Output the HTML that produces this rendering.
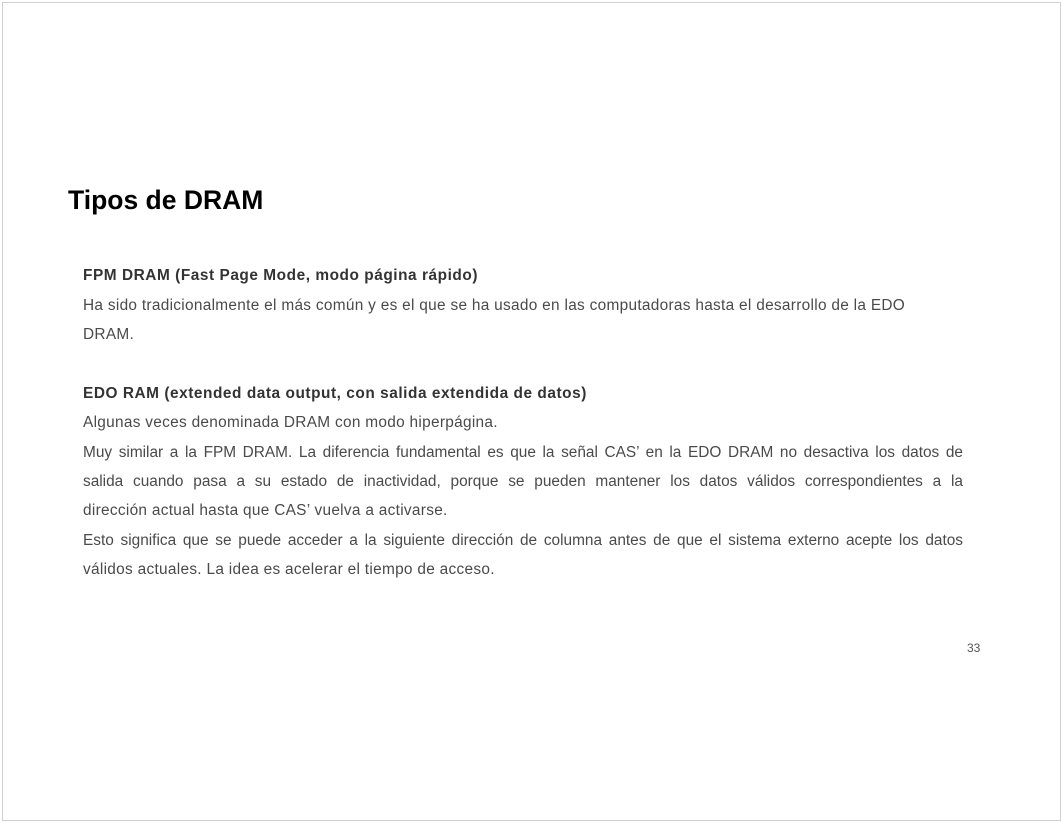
<!DOCTYPE html>
<html><head><meta charset="utf-8"><style>
body{margin:0;width:1062px;height:822px;background:#fff;position:relative;overflow:hidden;font-family:"Liberation Sans",sans-serif}
.frame{position:absolute;left:2px;top:2px;width:1057px;height:817px;border:1px solid #d0d0d0}
h1{position:absolute;left:68px;top:185px;margin:0;font-size:26.5px;font-weight:bold;color:#000}
.l{position:absolute;left:83px;font-size:15.4px;letter-spacing:0.3px;color:#4a4a4a;white-space:nowrap;line-height:20px}
.j{width:880px;text-align:justify;text-align-last:justify;letter-spacing:0}
.b{font-weight:bold;color:#333;letter-spacing:0.55px}
.pn{position:absolute;left:967px;top:641px;font-size:12px;color:#555}
</style></head><body>
<div class="frame"></div>
<h1>Tipos de DRAM</h1>
<div class="l b" style="top:266px">FPM DRAM (Fast Page Mode, modo página rápido)</div>
<div class="l" style="top:296px">Ha sido tradicionalmente el más común y es el que se ha usado en las computadoras hasta el desarrollo de la EDO</div>
<div class="l" style="top:325px">DRAM.</div>
<div class="l b" style="top:384px">EDO RAM (extended data output, con salida extendida de datos)</div>
<div class="l" style="top:413px">Algunas veces denominada DRAM con modo hiperpágina.</div>
<div class="l j" style="top:443px">Muy similar a la FPM DRAM. La diferencia fundamental es que la señal CAS’ en la EDO DRAM no desactiva los datos de</div>
<div class="l j" style="top:472px">salida cuando pasa a su estado de inactividad, porque se pueden mantener los datos válidos correspondientes a la</div>
<div class="l" style="top:501px">dirección actual hasta que CAS’ vuelva a activarse.</div>
<div class="l j" style="top:531px">Esto significa que se puede acceder a la siguiente dirección de columna antes de que el sistema externo acepte los datos</div>
<div class="l" style="top:560px">válidos actuales. La idea es acelerar el tiempo de acceso.</div>
<div class="pn">33</div>
</body></html>
